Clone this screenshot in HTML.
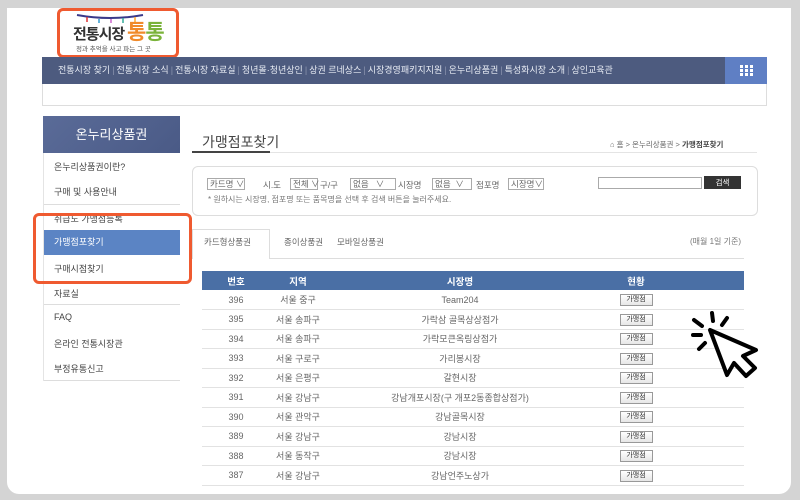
<!DOCTYPE html>
<html><head><meta charset="utf-8"><style>
*{margin:0;padding:0;box-sizing:border-box}
body{width:800px;height:500px;background:#d4d4d4;font-family:"Liberation Sans","Noto Sans CJK KR",sans-serif;position:relative;overflow:hidden;color:#555}
.a{position:absolute}
.card{left:7px;top:8px;width:784px;height:486px;background:#fff;border-radius:0 0 12px 12px}
.nav{left:42px;top:57px;width:725px;height:27px;background:#4d5b7f;color:#e8ecf4;font-size:9px;line-height:27px;white-space:nowrap;padding-left:16px}
.nav span{margin-right:2px}
.nav i{font-style:normal;color:#8a94ad;margin-right:2px}
.grid{left:725px;top:57px;width:42px;height:27px;background:#5f7fc4}
.side div{position:absolute;left:43px;width:137px;font-size:9px;color:#444;padding-left:11px}
td{font-size:9px;color:#666;text-align:center;height:19.5px;border-bottom:1px solid #e2e2e2}
th{font-size:9.5px;color:#fff;font-weight:bold;height:19px}
.btn{display:inline-block;width:33px;height:12px;border:1px solid #999;background:linear-gradient(#fff,#e6e6e6);font-size:7px;line-height:10px;color:#333}
.sel{position:absolute;top:178px;border:1px solid #aaa;height:12px;line-height:10px;padding:0 2px;font-size:8.5px;color:#666;white-space:nowrap}
.lb{position:absolute;top:179px;font-size:8.5px;color:#666;white-space:nowrap}
</style></head><body>
<div class="a card"></div>
<!-- logo -->
<div class="a" style="left:57px;top:8px;width:122px;height:50px;border:3px solid #ef5a30;border-radius:6px"></div>
<svg class="a" style="left:75px;top:12px" width="70" height="12"><path d="M2 3 Q35 9 68 3" stroke="#3a3a8a" stroke-width="2" fill="none"/><g stroke-width="1.5"><line x1="12" y1="5" x2="12" y2="10" stroke="#d33"/><line x1="24" y1="7" x2="24" y2="11" stroke="#39c"/><line x1="36" y1="7" x2="36" y2="11" stroke="#c6c"/><line x1="48" y1="6" x2="48" y2="11" stroke="#3a9"/><line x1="60" y1="5" x2="60" y2="10" stroke="#fa3"/></g></svg>
<div class="a" style="left:73px;top:23px;font-size:15px;font-weight:bold;color:#333;letter-spacing:-1px">전통시장</div>
<div class="a" style="left:127px;top:16px;font-size:21px;font-weight:bold;letter-spacing:-1px"><span style="color:#f08a2a">통</span><span style="color:#7ab33a">통</span></div>
<div class="a" style="left:76px;top:43px;font-size:6.5px;color:#555">정과 추억을 사고 파는 그 곳</div>
<!-- nav -->
<div class="a nav"><span>전통시장 찾기</span><i>|</i><span>전통시장 소식</span><i>|</i><span>전통시장 자료실</span><i>|</i><span>청년몰·청년상인</span><i>|</i><span>상권 르네상스</span><i>|</i><span>시장경영패키지지원</span><i>|</i><span>온누리상품권</span><i>|</i><span>특성화시장 소개</span><i>|</i><span>상인교육관</span></div>
<div class="a grid"><svg width="42" height="27"><g fill="#fff"><rect x="15" y="8" width="3" height="3"/><rect x="20" y="8" width="3" height="3"/><rect x="25" y="8" width="3" height="3"/><rect x="15" y="12" width="3" height="3"/><rect x="20" y="12" width="3" height="3"/><rect x="25" y="12" width="3" height="3"/><rect x="15" y="16" width="3" height="3"/><rect x="20" y="16" width="3" height="3"/><rect x="25" y="16" width="3" height="3"/></g></svg></div>
<div class="a" style="left:42px;top:84px;width:725px;height:22px;border:1px solid #ddd;border-top:none"></div>
<!-- sidebar -->
<div class="a" style="left:43px;top:116px;width:137px;height:37px;background:linear-gradient(135deg,#5a6b98,#4a5a86);color:#fff;font-size:13px;text-align:center;line-height:37px">온누리상품권</div>
<div class="side">
<div style="top:160px">온누리상품권이란?</div>
<div style="top:185px">구매 및 사용안내</div>
<div style="top:204px;height:1px;background:#ddd;padding:0"></div>
<div style="top:212px">취급도 가맹점등록</div>
<div style="top:230px;height:25px;background:#5b84c4;color:#fff;line-height:25px">가맹점포찾기</div>
<div style="top:262px">구매시점찾기</div>
<div style="top:287px">자료실</div>
<div style="top:304px;height:1px;background:#ddd;padding:0"></div>
<div style="top:312px">FAQ</div>
<div style="top:337px">온라인 전통시장관</div>
<div style="top:362px">부정유통신고</div>
<div style="top:380px;height:1px;background:#ddd;padding:0"></div>
</div>
<div class="a" style="left:43px;top:153px;width:1px;height:228px;background:#e4e4e4"></div>
<div class="a" style="left:33px;top:213px;width:159px;height:71px;border:3px solid #ef5a30;border-radius:6px"></div>
<!-- title -->
<div class="a" style="left:202px;top:132px;font-size:14px;color:#444">가맹점포찾기</div>
<div class="a" style="left:192px;top:152px;width:565px;height:1px;background:#e4e4e4"></div>
<div class="a" style="left:192px;top:151px;width:78px;height:2px;background:#444"></div>
<div class="a" style="left:610px;top:139px;font-size:7.5px;color:#666">⌂ 홈 &gt; 온누리상품권 &gt; <b style="color:#444">가맹점포찾기</b></div>
<!-- search -->
<div class="a" style="left:192px;top:166px;width:566px;height:50px;border:1px solid #ddd;border-radius:6px"></div>
<span class="sel" style="left:207px;width:38px">카드명 ∨</span>
<span class="lb" style="left:263px">시.도</span>
<span class="sel" style="left:290px;width:28px">전체 ∨</span>
<span class="lb" style="left:320px">구/구</span>
<span class="sel" style="left:350px;width:46px">없음 &nbsp;&nbsp;∨</span>
<span class="lb" style="left:398px">시장명</span>
<span class="sel" style="left:432px;width:40px">없음 &nbsp;∨</span>
<span class="lb" style="left:476px">점포명</span>
<span class="sel" style="left:508px;width:36px">시장명∨</span>
<div class="a" style="left:598px;top:177px;width:104px;height:12px;border:1px solid #aaa"></div>
<div class="a" style="left:704px;top:176px;width:37px;height:13px;background:#333;color:#fff;font-size:7.5px;text-align:center;line-height:13px">검색</div>
<div class="a" style="left:208px;top:194px;font-size:8px;color:#777">* 원하시는 시장명, 점포명 또는 품목명을 선택 후 검색 버튼을 눌러주세요.</div>
<!-- tabs -->
<div class="a" style="left:192px;top:229px;width:78px;height:30px;border:1px solid #ddd;border-bottom:none;background:#fff"></div>
<div class="a" style="left:270px;top:258px;width:474px;height:1px;background:#ddd"></div>
<div class="a" style="left:204px;top:236px;font-size:8.5px;color:#666">카드형상품권</div>
<div class="a" style="left:284px;top:236px;font-size:8.5px;color:#666">종이상품권</div>
<div class="a" style="left:337px;top:236px;font-size:8.5px;color:#666">모바일상품권</div>
<div class="a" style="left:690px;top:236px;font-size:8px;color:#777">(매월 1일 기준)</div>
<!-- table -->
<table class="a" style="left:202px;top:271px;width:542px;border-collapse:collapse;table-layout:fixed">
<colgroup><col style="width:68px"><col style="width:56px"><col style="width:268px"><col style="width:84px"><col style="width:66px"></colgroup>
<tr style="background:#4a6fa5"><th>번호</th><th>지역</th><th>시장명</th><th>현황</th><th></th></tr>
<tr><td>396</td><td>서울 중구</td><td>Team204</td><td><span class="btn">가맹점</span></td><td></td></tr>
<tr><td>395</td><td>서울 송파구</td><td>가락삼 골목상상점가</td><td><span class="btn">가맹점</span></td><td></td></tr>
<tr><td>394</td><td>서울 송파구</td><td>가락모큰옥링상점가</td><td><span class="btn">가맹점</span></td><td></td></tr>
<tr><td>393</td><td>서울 구로구</td><td>가리봉시장</td><td><span class="btn">가맹점</span></td><td></td></tr>
<tr><td>392</td><td>서울 은평구</td><td>갈현시장</td><td><span class="btn">가맹점</span></td><td></td></tr>
<tr><td>391</td><td>서울 강남구</td><td>강남개포시장(구 개포2동종합상점가)</td><td><span class="btn">가맹점</span></td><td></td></tr>
<tr><td>390</td><td>서울 관악구</td><td>강남골목시장</td><td><span class="btn">가맹점</span></td><td></td></tr>
<tr><td>389</td><td>서울 강남구</td><td>강남시장</td><td><span class="btn">가맹점</span></td><td></td></tr>
<tr><td>388</td><td>서울 동작구</td><td>강남시장</td><td><span class="btn">가맹점</span></td><td></td></tr>
<tr><td>387</td><td>서울 강남구</td><td>강남언주노상가</td><td><span class="btn">가맹점</span></td><td></td></tr>
</table>
<!-- cursor -->
<svg class="a" style="left:690px;top:308px" width="75" height="75">
<path d="M20 22 L37 67 L44 55 L56 68 L65 60 L53 48 L66 42 Z" fill="#fff" stroke="#000" stroke-width="4" stroke-linejoin="round"/>
<g stroke="#000" stroke-width="4" stroke-linecap="round"><line x1="22" y1="5" x2="23" y2="13"/><line x1="37" y1="10" x2="32" y2="17"/><line x1="4" y1="12" x2="12" y2="18"/><line x1="3" y1="27" x2="11" y2="27"/><line x1="9" y1="41" x2="15" y2="35"/></g>
</svg>
</body></html>
